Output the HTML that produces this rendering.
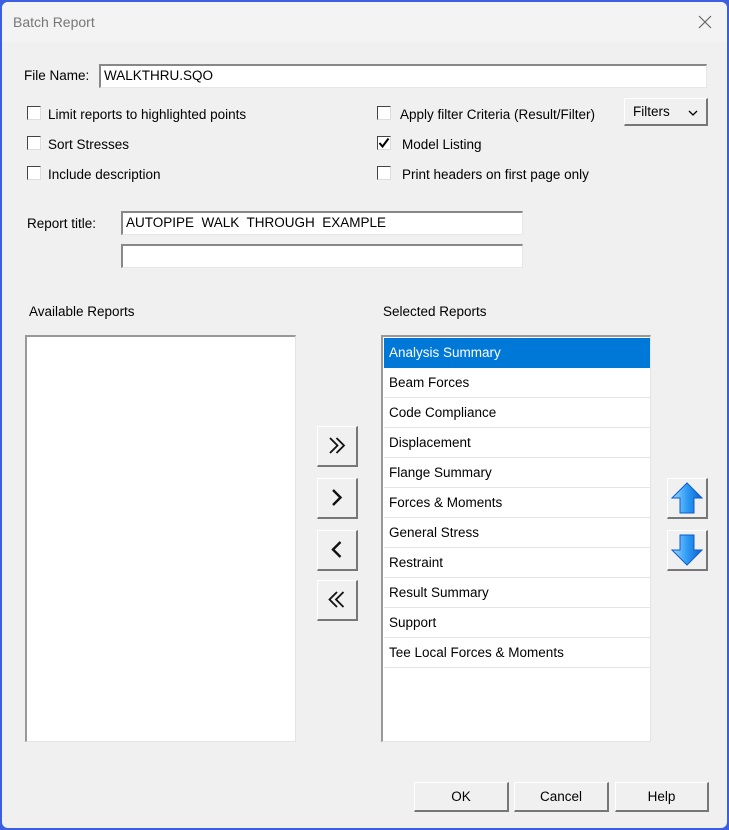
<!DOCTYPE html><html><head><style>
*{box-sizing:border-box}
body{margin:0;width:729px;height:830px;background:#3b5fe0;font-family:"Liberation Sans",sans-serif;font-size:13.5px;color:#000;position:relative;overflow:hidden}
.win{position:absolute;left:2px;top:2px;width:725px;height:826px;background:#f0f0f0;border-radius:6px;overflow:hidden}
.tb{position:absolute;left:0;top:0;width:725px;height:40px;background:#f3f3f3}
.a{position:absolute;white-space:nowrap}
.inp{position:absolute;background:#fff;border-top:2px solid #888;border-left:2px solid #888;border-right:1px solid #e6e6e6;border-bottom:1px solid #e6e6e6;padding-left:3px;line-height:20px}
.cb{position:absolute;width:14px;height:14px;background:#fff;border:1px solid #444;border-right-color:#ddd;border-bottom-color:#ddd}
.btn{position:absolute;background:#f0f0f0;border-top:1px solid #fff;border-left:1px solid #fff;border-right:2px solid #777;border-bottom:2px solid #777;text-align:center}
.list{position:absolute;background:#fff;border-top:2px solid #999;border-left:2px solid #999;border-right:1px solid #e4e4e4;border-bottom:1px solid #e4e4e4}
.it{height:30px;line-height:30px;padding-left:5px;border-bottom:1px solid #e4e4e4;width:266px}
</style></head><body><div class="win">
<div class="tb"></div>
<div class="a" style="left:11px;top:12px;color:#777;font-size:14px">Batch Report</div>
<svg class="a" style="left:696px;top:13px" width="14" height="14"><path d="M1 1L13 13M13 1L1 13" stroke="#666" stroke-width="1.2"/></svg>
<div class="a" style="left:22px;top:66px">File Name:</div>
<div class="inp" style="left:97px;top:62px;width:608px;height:24px">WALKTHRU.SQO</div>
<div class="cb" style="left:25px;top:104px"></div><div class="a" style="left:46px;top:105px">Limit reports to highlighted points</div>
<div class="cb" style="left:25px;top:134px"></div><div class="a" style="left:46px;top:135px">Sort Stresses</div>
<div class="cb" style="left:25px;top:164px"></div><div class="a" style="left:46px;top:165px">Include description</div>
<div class="cb" style="left:375px;top:104px"></div><div class="a" style="left:398px;top:105px">Apply filter Criteria (Result/Filter)</div>
<div class="cb" style="left:375px;top:134px"><svg width="12" height="12" style="position:absolute;left:0;top:0"><path d="M1.5 6L4.5 9.5L10.5 1.5" stroke="#000" stroke-width="2" fill="none"/></svg></div><div class="a" style="left:400px;top:135px">Model Listing</div>
<div class="cb" style="left:375px;top:164px"></div><div class="a" style="left:400px;top:165px">Print headers on first page only</div>
<div class="btn" style="left:622px;top:96px;width:84px;height:28px;line-height:26px;text-align:left;padding-left:8px">Filters<svg style="position:absolute;left:63px;top:11px" width="10" height="7"><path d="M1 1L5 5L9 1" stroke="#000" stroke-width="1.3" fill="none"/></svg></div>
<div class="a" style="left:25px;top:214px">Report title:</div>
<div class="inp" style="left:119px;top:209px;width:402px;height:24px">AUTOPIPE&nbsp; WALK&nbsp; THROUGH&nbsp; EXAMPLE</div>
<div class="inp" style="left:119px;top:242px;width:402px;height:24px"></div>
<div class="a" style="left:27px;top:302px">Available Reports</div>
<div class="a" style="left:381px;top:302px">Selected Reports</div>
<div class="list" style="left:23px;top:333px;width:271px;height:407px"></div>
<div class="list" style="left:379px;top:333px;width:270px;height:407px;padding:1px 0 0 1px">
<div class="it" style="background:#0078d7;color:#fff;border-color:#0078d7">Analysis Summary</div>
<div class="it">Beam Forces</div><div class="it">Code Compliance</div><div class="it">Displacement</div><div class="it">Flange Summary</div><div class="it">Forces &amp; Moments</div><div class="it">General Stress</div><div class="it">Restraint</div><div class="it">Result Summary</div><div class="it">Support</div><div class="it">Tee Local Forces &amp; Moments</div>
</div>
<div class="btn" style="left:315px;top:424px;width:41px;height:41px"><svg width="38" height="38"><path d="M12 11L19.5 18.5L12 26M18.5 11L26 18.5L18.5 26" stroke="#111" stroke-width="1.8" fill="none"/></svg></div>
<div class="btn" style="left:315px;top:476px;width:41px;height:41px"><svg width="38" height="38"><path d="M15 11L22.5 18.5L15 26" stroke="#111" stroke-width="2.4" fill="none"/></svg></div>
<div class="btn" style="left:315px;top:528px;width:41px;height:41px"><svg width="38" height="38"><path d="M22.5 11L15 18.5L22.5 26" stroke="#111" stroke-width="2.4" fill="none"/></svg></div>
<div class="btn" style="left:315px;top:578px;width:41px;height:41px"><svg width="38" height="38"><path d="M19 11L11.5 18.5L19 26M25.5 11L18 18.5L25.5 26" stroke="#111" stroke-width="1.8" fill="none"/></svg></div>
<svg width="0" height="0"><defs><linearGradient id="g" x1="0" x2="1"><stop offset="0" stop-color="#9fd8ff"/><stop offset=".5" stop-color="#2e9cf5"/><stop offset="1" stop-color="#0a62d0"/></linearGradient></defs></svg>
<div class="btn" style="left:665px;top:476px;width:41px;height:41px"><svg width="38" height="38"><path d="M19 4L34 19H26V34H12V19H4Z" fill="url(#g)" stroke="#0b5cc8" stroke-width="1"/></svg></div>
<div class="btn" style="left:665px;top:528px;width:41px;height:41px"><svg width="38" height="38"><path d="M19 34L34 19H26V4H12V19H4Z" fill="url(#g)" stroke="#0b5cc8" stroke-width="1"/></svg></div>
<div class="btn" style="left:412px;top:780px;width:95px;height:30px;line-height:27px">OK</div>
<div class="btn" style="left:512px;top:780px;width:95px;height:30px;line-height:27px">Cancel</div>
<div class="btn" style="left:613px;top:780px;width:94px;height:30px;line-height:27px">Help</div>
</div></body></html>
